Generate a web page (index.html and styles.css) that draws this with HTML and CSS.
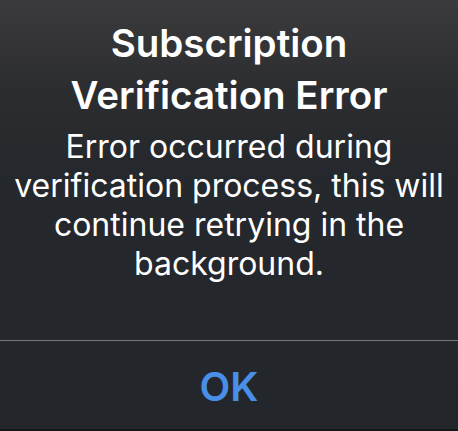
FILE: index.html
```html
<!DOCTYPE html>
<html lang="en">
<head>
  <meta charset="UTF-8" />
  <meta name="viewport" content="width=device-width, initial-scale=1.0"/>
  <title>Subscription Verification Error</title>
  <link rel="stylesheet" href="styles.css">
</head>
<body>

  <div class="alert">
    <div class="alert-body">
      <h1 class="alert-title">Subscription Verification Error</h1>
      <p class="alert-msg">Error occurred during verification process, this will continue retrying in the background.</p>
    </div>

    <div class="alert-actions">
      <button class="alert-btn">OK</button>
    </div>
  </div>

</body>
</html>
```

FILE: styles.css
```css
html, body {
  margin: 0;
  padding: 0;
  height: 100%;
}

body {
  background: linear-gradient(180deg, #3b3b3d 0%, #2c2d30 90px, #25282c 170px, #23272b 100%);
  font-family: 'Inter', 'Noto Sans', sans-serif;
  color: #fff;
  overflow: hidden;
}

.alert {
  display: flex;
  flex-direction: column;
  height: 431px;
}

.alert-body {
  padding: 17px 4px 0;
  text-align: center;
  height: 323px;
}

.alert-title {
  margin: 0;
  font-size: 38.5px;
  line-height: 52px;
  font-weight: 600;
  padding: 0 30px;
}

.alert-msg {
  margin: 6px 0 0;
  font-size: 32px;
  line-height: 39px;
  font-weight: 400;
}

.alert-actions {
  border-top: 1px solid #76777a;
  flex: 1;
  display: flex;
  align-items: center;
  justify-content: center;
  border-bottom: 2px solid #15181b;
}

.alert-btn {
  background: none;
  border: none;
  color: #4a8fe7;
  font-family: inherit;
  font-size: 40px;
  font-weight: 600;
  padding: 2px 0 0;
  cursor: pointer;
}
```
